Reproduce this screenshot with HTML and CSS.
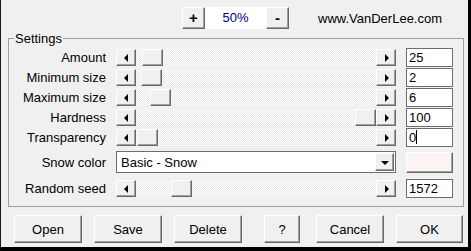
FILE: index.html
```html
<!DOCTYPE html>
<html lang="en">
<head>
    <meta charset="UTF-8">
    <title>Snow Settings</title>
    <link rel="stylesheet" href="styles.css">
</head>
<body>
    <div class="window">
        <div class="toolbar">
            <button class="raised zoom-btn plus">+</button>
            <div class="zoom-field">50%</div>
            <button class="raised zoom-btn">-</button>
            <span class="site">www.VanDerLee.com</span>
        </div>

        <fieldset class="settings">
            <legend>Settings</legend>

            <div class="row">
                <span class="lbl">Amount</span>
                <div class="scroll">
                    <span class="raised arrow left"></span>
                    <div class="trough"><span class="raised thumb" style="margin-left: 6px"></span></div>
                    <span class="raised arrow right"></span>
                </div>
                <div class="edit">25</div>
            </div>
            <div class="row">
                <span class="lbl">Minimum size</span>
                <div class="scroll">
                    <span class="raised arrow left"></span>
                    <div class="trough"><span class="raised thumb" style="margin-left: 5px"></span></div>
                    <span class="raised arrow right"></span>
                </div>
                <div class="edit">2</div>
            </div>
            <div class="row">
                <span class="lbl">Maximum size</span>
                <div class="scroll">
                    <span class="raised arrow left"></span>
                    <div class="trough"><span class="raised thumb" style="margin-left: 14px"></span></div>
                    <span class="raised arrow right"></span>
                </div>
                <div class="edit">6</div>
            </div>
            <div class="row">
                <span class="lbl">Hardness</span>
                <div class="scroll">
                    <span class="raised arrow left"></span>
                    <div class="trough"><span class="raised thumb" style="margin-left: 219px"></span></div>
                    <span class="raised arrow right"></span>
                </div>
                <div class="edit">100</div>
            </div>
            <div class="row">
                <span class="lbl">Transparency</span>
                <div class="scroll">
                    <span class="raised arrow left"></span>
                    <div class="trough"><span class="raised thumb" style="margin-left: 1px"></span></div>
                    <span class="raised arrow right"></span>
                </div>
                <div class="edit">0<span class="caret"></span></div>
            </div>

            <div class="row combo-row">
                <span class="lbl">Snow color</span>
                <div class="combo">
                    <span class="combo-text">Basic - Snow</span>
                    <span class="raised drop"></span>
                </div>
                <button class="raised swatch"></button>
            </div>

            <div class="row seed-row">
                <span class="lbl">Random seed</span>
                <div class="scroll">
                    <span class="raised arrow left"></span>
                    <div class="trough"><span class="raised thumb" style="margin-left: 35px"></span></div>
                    <span class="raised arrow right"></span>
                </div>
                <div class="edit">1572</div>
            </div>
        </fieldset>

        <div class="buttons">
            <button class="raised btn">Open</button>
            <button class="raised btn">Save</button>
            <button class="raised btn">Delete</button>
            <button class="raised btn help">?</button>
            <button class="raised btn cancel">Cancel</button>
            <button class="raised btn ok">OK</button>
        </div>
    </div>
</body>
</html>
```

FILE: styles.css
```css
body {
    margin: 0;
    font-family: 'Liberation Sans', Arial, sans-serif;
    font-size: 13px;
    color: #000;
}
.window {
    width: 471px;
    height: 251px;
    box-sizing: border-box;
    background: #f0f0f0;
    border-left: 1px solid #1a1a1a;
    border-right: 3px solid #000;
    border-bottom: 4px solid #000;
}
.raised {
    box-sizing: border-box;
    background: #f0f0f0;
    border: 1px solid;
    border-color: #fff #696969 #696969 #fff;
    box-shadow: inset -1px -1px 0 #a0a0a0;
    padding: 0;
    font: inherit;
    color: #000;
}

/* top bar */
.toolbar {
    display: flex;
    align-items: center;
    height: 22px;
    padding-top: 7px;
}
.zoom-btn {
    width: 23px;
    height: 22px;
    font-weight: bold;
    font-size: 15px;
    line-height: 18px;
}
.plus {
    margin-left: 181px;
}
.zoom-field {
    width: 61px;
    height: 22px;
    background: #fff;
    color: #000080;
    text-align: center;
    line-height: 21px;
}
.site {
    margin-left: 29px;
}

/* settings group */
.settings {
    margin: 2px 4px 0 7px;
    padding: 2px 0 8px 0;
    border: 1px solid #a0a0a0;
}
.settings legend {
    margin-left: 5px;
    padding: 0 1px;
    line-height: 15px;
}
.row {
    display: flex;
    align-items: center;
    height: 19px;
    margin-top: 1px;
}
.row:first-of-type {
    margin-top: 0;
}
.combo-row {
    height: 22px;
    margin-top: 4px;
}
.seed-row {
    margin-top: 6px;
}
.lbl {
    width: 97px;
    text-align: right;
    margin-right: 10px;
    white-space: nowrap;
}
.scroll {
    display: flex;
    width: 280px;
    height: 17px;
    margin-right: 10px;
}
.trough {
    flex: 1;
    display: flex;
    background: repeating-conic-gradient(#fff 0 25%, #e9e9e9 0 50%) 0 0 / 2px 2px;
}
.thumb {
    width: 21px;
    height: 17px;
}
.arrow {
    position: relative;
    width: 20px;
    height: 17px;
}
.arrow::after {
    content: '';
    position: absolute;
    top: 4px;
    border-top: 4px solid transparent;
    border-bottom: 4px solid transparent;
}
.arrow.left::after {
    left: 7px;
    border-right: 4px solid #000;
}
.arrow.right::after {
    left: 8px;
    border-left: 4px solid #000;
}
.edit {
    box-sizing: border-box;
    width: 47px;
    height: 19px;
    background: #fff;
    border: 1px solid #6d6d6d;
    padding-left: 2px;
    line-height: 17px;
    white-space: nowrap;
}
.caret {
    display: inline-block;
    width: 1px;
    height: 14px;
    background: #000;
    vertical-align: -2px;
}

/* snow color */
.combo {
    box-sizing: border-box;
    display: flex;
    align-items: center;
    width: 280px;
    height: 22px;
    margin-right: 10px;
    background: #fff;
    border: 1px solid #6d6d6d;
    padding: 1px;
}
.combo-text {
    flex: 1;
    padding-left: 3px;
}
.drop {
    position: relative;
    width: 19px;
    height: 18px;
}
.drop::after {
    content: '';
    position: absolute;
    left: 5px;
    top: 7px;
    border-left: 4px solid transparent;
    border-right: 4px solid transparent;
    border-top: 4px solid #000;
}
.swatch {
    width: 47px;
    height: 21px;
    background: #fbf4f3;
}

/* bottom buttons */
.buttons {
    display: flex;
    margin-top: 8px;
}
.btn {
    width: 68px;
    height: 28px;
    margin-left: 12px;
}
.btn:first-child {
    margin-left: 13px;
}
.help {
    width: 36px;
    margin-left: 22px;
}
.cancel {
    margin-left: 16px;
}
.ok {
    width: 67px;
    margin-left: 12px;
}
```
